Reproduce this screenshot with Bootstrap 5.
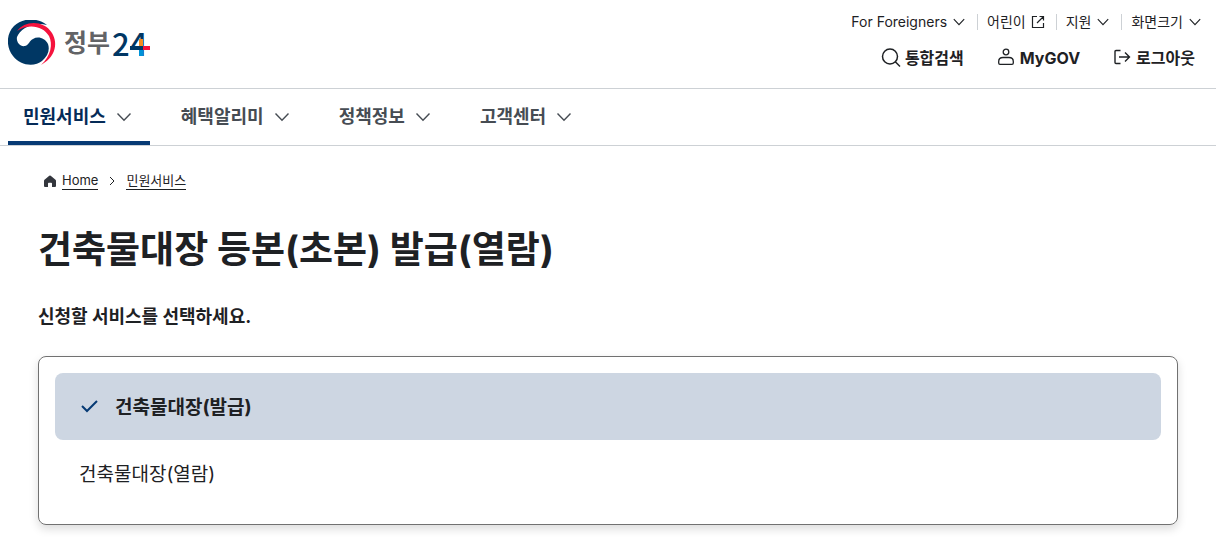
<!DOCTYPE html>
<html lang="ko">
<head>
<meta charset="utf-8">
<meta name="viewport" content="width=device-width, initial-scale=1">
<title>건축물대장 등본(초본) 발급(열람) | 정부24</title>
<link href="https://cdn.jsdelivr.net/npm/bootstrap@5.3.0/dist/css/bootstrap.min.css" rel="stylesheet">
<style>
  body { font-family: Inter, "Noto Sans CJK KR", sans-serif; color: #1e2124; background: #fff; line-height: 24px; }
  a { color: inherit; text-decoration: none; }
  svg { fill: none; stroke: currentColor; flex: none; }
  .site-head { padding: 8px 13px 0 8px; height: 88px; }
  .brand-mark { margin-top: 12px; }
  .util-list li + li { border-left: 1px solid #cdd1d5; }
  .util-list li { padding: 0 10px 0 9px; line-height: 16px; height: 16px; }
  .util-list li:last-child { padding-right: 0; }
  .util-list { font-size: 14px; padding-top: 6px; }
  .plain-btn { background: none; border: 0; padding: 0; color: inherit; }
  .quick-list { gap: 32px; font-size: 16px; font-weight: 700; padding: 16px 8px 0 0; }
  .main-menu { border-top: 1px solid #cdd1d5; border-bottom: 1px solid #cdd1d5; padding-left: 8px; }
  .main-menu ul { gap: 16px; }
  .menu-btn { height: 56px; padding: 4px 16px 0 15px; font-size: 18px; font-weight: 700; color: #464c53; border-bottom: 4px solid transparent; }
  .menu-btn.active { color: #052b57; border-color: #063a74; }
  .menu-btn svg { color: #464c53; }
  .page-body { padding: 25px 38px 12px; }
  .crumbs { font-size: 13px; line-height: 18px; padding: 0 0 0 4px; }
  .crumbs a span { border-bottom: 1px solid #1e2124; }
  .page-title { font-size: 37px; font-weight: 700; line-height: 56px; margin: 32px 0 0; }
  .lead-text { font-size: 18px; font-weight: 700; line-height: 28px; margin: 25px 0; }
  .choice-box { border: 1px solid #717171; border-radius: 8px; padding: 16px 16px 17px; box-shadow: 0 4px 10px rgba(0,0,0,.14); }
  .choice { height: 67px; padding: 2px 24px 0; border-radius: 8px; font-size: 19px; }
  .choice.chosen { background: #cdd6e2; font-weight: 700; }
  .choice svg { color: #063a74; }
</style>
</head>
<body>
<svg width="0" height="0" class="position-absolute" aria-hidden="true">
  <symbol id="down" viewBox="0 0 20 20"><path d="M3.5 6.5 10 13.3 16.5 6.5" stroke-width="1.4"/></symbol>
</svg>
<header>
  <div class="site-head d-flex justify-content-between">
    <a href="#" class="brand-mark" aria-label="정부24">
      <svg width="144" height="48" viewBox="8 20 144 48">
        <g stroke="none">
          <path fill="#003764" d="M47 25C37 17 22 18 14 26C6 34 6 47 13 56C20 66 35 67 42 61C48 56 50 50 48 44C45 38 38 36 33 39C29 41 29 45 25 46C20 47 16 42 17 37C20 29 33 21 47 25Z"/>
          <path fill="#f5133d" d="M17 31C25 20 44 20 52 33C59 45 54 58 41 65C51 56 53 44 49 36C43 26 29 23 17 31Z"/>
          <text x="64" y="52" font-size="25" font-weight="700" fill="#626366" font-family="Noto Sans CJK KR, sans-serif">정부</text>
          <text x="112" y="56" font-size="31" font-weight="500" fill="#003764" font-family="Noto Sans CJK KR, sans-serif">24</text>
          <path fill="#f68b1f" d="M139 39h4v7h-4z"/><path fill="#003764" d="M130 46h13v4h-13z"/><path fill="#f5133d" d="M143 46h7v4h-7z"/><path fill="#0093d8" d="M139 50h4v6h-4z"/>
        </g>
      </svg>
    </a>
    <div class="d-flex flex-column align-items-end">
      <ul class="util-list list-unstyled d-flex mb-0">
        <li><button class="plain-btn d-flex align-items-center gap-1">For Foreigners <svg width="16" height="16"><use href="#down"/></svg></button></li>
        <li><a href="#" class="d-flex align-items-center gap-1">어린이 <svg width="16" height="16" viewBox="0 0 16 16" stroke-width="1.2"><path d="M7 2.500H2.500V13.500H13.500V9M9.500 2.500H13.500V6.500M13.500 2.500 7 9"/></svg></a></li>
        <li><button class="plain-btn d-flex align-items-center gap-1">지원 <svg width="16" height="16"><use href="#down"/></svg></button></li>
        <li><button class="plain-btn d-flex align-items-center gap-1">화면크기 <svg width="16" height="16"><use href="#down"/></svg></button></li>
      </ul>
      <div class="quick-list d-flex">
        <button class="plain-btn fw-bold d-flex align-items-center gap-1"><svg width="20" height="20" viewBox="0 0 20 20" stroke-width="1.5"><circle cx="9" cy="8.500" r="7.500"/><path d="M14.300 13.800 19 18.500"/></svg>통합검색</button>
        <a href="#" class="d-flex align-items-center gap-1"><svg width="20" height="20" viewBox="0 0 20 20" stroke-width="1.3"><circle cx="10" cy="4" r="2.800"/><path d="M4 16.300Q2.700 16.300 2.700 15V13.500Q2.700 9.500 7 9.500H13Q17.300 9.500 17.300 13.500V15Q17.300 16.300 16 16.300Z"/></svg>MyGOV</a>
        <button class="plain-btn fw-bold d-flex align-items-center gap-1"><svg width="20" height="20" viewBox="0 0 20 20" stroke-width="1.400"><path d="M8.500 2.500H4Q3 2.500 3 3.500V14.500Q3 15.500 4 15.500H8.500M7 9H17.500M13 4.500 17.500 9 13 13.500"/></svg>로그아웃</button>
      </div>
    </div>
  </div>
  <nav class="main-menu" aria-label="주 메뉴">
    <ul class="list-unstyled d-flex mb-0">
      <li><button class="plain-btn menu-btn active d-flex align-items-center gap-2">민원서비스 <svg width="20" height="20"><use href="#down"/></svg></button></li>
      <li><button class="plain-btn menu-btn d-flex align-items-center gap-2">혜택알리미 <svg width="20" height="20"><use href="#down"/></svg></button></li>
      <li><button class="plain-btn menu-btn d-flex align-items-center gap-2">정책정보 <svg width="20" height="20"><use href="#down"/></svg></button></li>
      <li><button class="plain-btn menu-btn d-flex align-items-center gap-2">고객센터 <svg width="20" height="20"><use href="#down"/></svg></button></li>
    </ul>
  </nav>
</header>
<main class="page-body">
  <nav class="crumbs d-flex align-items-center" aria-label="현재 위치">
    <a href="#" class="d-flex align-items-center gap-1"><svg width="16" height="16" viewBox="0 0 16 16"><path fill="#33363d" stroke="none" d="M8.700 2.700 13.500 6.800Q14 7.300 14 8V13Q14 14 13 14H10V10.500Q10 9.700 9.200 9.700H6.800Q6 9.700 6 10.500V14H3Q2 14 2 13V8Q2 7.300 2.500 6.800L7.300 2.700Q8 2.200 8.700 2.700Z"/></svg><span>Home</span></a>
    <svg class="mx-2" width="12" height="12" viewBox="0 0 12 12"><path d="M4 2 8 6 4 10"/></svg>
    <a href="#"><span class="d-block">민원서비스</span></a>
  </nav>
  <h1 class="page-title">건축물대장 등본(초본) 발급(열람)</h1>
  <p class="lead-text">신청할 서비스를 선택하세요.</p>
  <div class="choice-box">
    <button class="plain-btn choice chosen d-flex align-items-center gap-3 w-100" aria-pressed="true"><svg width="20" height="20" viewBox="0 0 20 20" stroke-width="2"><path d="M3 8 8 13 18 3"/></svg>건축물대장(발급)</button>
    <button class="plain-btn choice d-flex align-items-center w-100" aria-pressed="false">건축물대장(열람)</button>
  </div>
</main>
<script src="https://cdn.jsdelivr.net/npm/bootstrap@5.3.0/dist/js/bootstrap.bundle.min.js"></script>
</body>
</html>
